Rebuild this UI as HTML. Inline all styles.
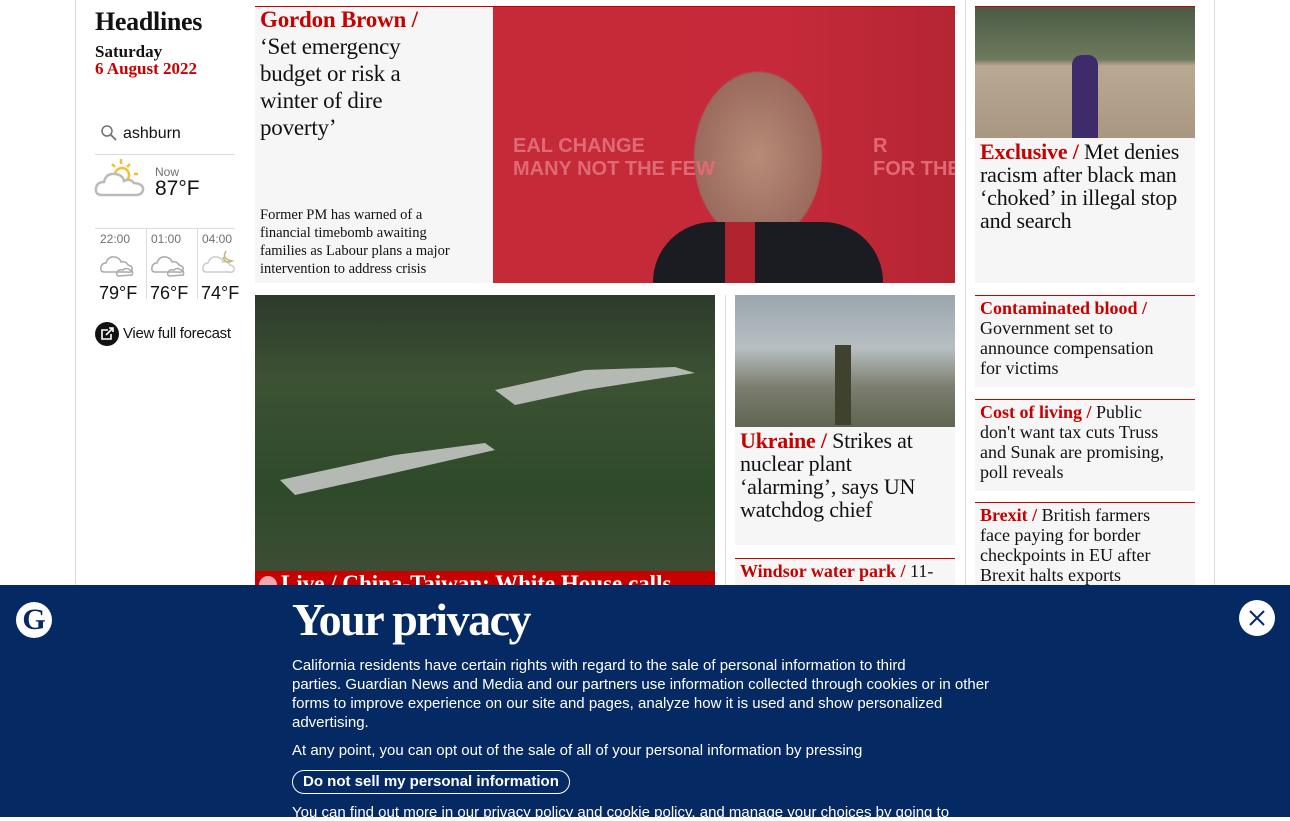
<!DOCTYPE html><html><head><style>
*{margin:0;padding:0;box-sizing:border-box}
body{width:1290px;height:817px;overflow:hidden;background:#fff;font-family:"Liberation Serif",serif;position:relative;color:#121212}
.a{position:absolute}
.k{color:#c70000;font-weight:bold}
.h{font-size:22px;line-height:23px;letter-spacing:-0.2px}
.s{font-family:"Liberation Sans",sans-serif}
.card{position:absolute;background:#f6f6f6;border-top:1px solid #c70000;padding:2px 5px}
.c{font-size:18px;line-height:20px;width:200px}
</style></head><body>
<div class="a" style="left:75px;top:0;width:1px;height:600px;background:#dcdcdc"></div>
<div class="a" style="left:1214px;top:0;width:1px;height:600px;background:#dcdcdc"></div>
<div class="a" style="left:725px;top:295px;width:1px;height:300px;background:#dcdcdc"></div>
<div class="a" style="left:965px;top:0;width:1px;height:600px;background:#dcdcdc"></div>

<div class="a" style="left:95px;top:7px;font-size:26px;font-weight:bold;letter-spacing:-0.3px">Headlines</div>
<div class="a" style="left:95px;top:43px;font-size:17px;font-weight:bold;line-height:17px">Saturday<br><span style="color:#c70000">6 August 2022</span></div>
<svg class="a" style="left:100px;top:124px" width="18" height="18"><circle cx="7" cy="7" r="5" fill="none" stroke="#707070" stroke-width="1.5"/><path d="M11 11L16 16" stroke="#707070" stroke-width="1.8"/></svg>
<div class="a s" style="left:123px;top:125px;font-size:16px">ashburn</div>
<div class="a" style="left:95px;top:154px;width:140px;height:1px;background:#dcdcdc"></div>
<svg class="a" style="left:94px;top:157px" width="56" height="42"><g stroke="#f5be2c" stroke-width="2.5"><line x1="27" y1="2" x2="27" y2="7"/><line x1="18" y1="7" x2="21" y2="10"/><line x1="36" y1="7" x2="33" y2="10"/><line x1="40" y1="17" x2="44" y2="17"/></g><circle cx="28" cy="18" r="7" fill="none" stroke="#f5be2c" stroke-width="2.5"/><path d="M8 38 Q1 38 2 31 Q3 25 10 25 Q12 16 21 17 Q29 18 30 24 Q36 21 40 26 Q50 27 49 33 Q48 38 42 38 Z" fill="#fff" stroke="#bbb" stroke-width="2.5"/></svg>
<div class="a s" style="left:155px;top:165px;font-size:12px;color:#707070">Now</div>
<div class="a s" style="left:155px;top:177px;font-size:21px">87°F</div>
<div class="a" style="left:95px;top:228px;width:140px;height:1px;background:#dcdcdc"></div>
<div class="a" style="left:146px;top:229px;width:1px;height:70px;background:#dcdcdc"></div>
<div class="a" style="left:197px;top:229px;width:1px;height:70px;background:#dcdcdc"></div>
<div class="a s" style="left:100px;top:232px;font-size:12px;color:#707070">22:00</div>
<div class="a s" style="left:151px;top:232px;font-size:12px;color:#707070">01:00</div>
<div class="a s" style="left:202px;top:232px;font-size:12px;color:#707070">04:00</div>
<svg class="a" style="left:99px;top:250px" width="140" height="28"><g fill="none" stroke="#aaa" stroke-width="1.5"><path d="M5 22 Q1 22 2 17 Q3 13 7 13 Q9 6 16 7 Q21 8 22 12 Q27 11 29 15 Q34 16 33 20 Q32 23 28 22 Z"/><path d="M20 26 Q17 26 18 22 Q20 19 24 20 Q27 17 31 20 Q35 21 33 25 Z"/><path d="M56 22 Q52 22 53 17 Q54 13 58 13 Q60 6 67 7 Q72 8 73 12 Q78 11 80 15 Q85 16 84 20 Q83 23 79 22 Z"/><path d="M71 26 Q68 26 69 22 Q71 19 75 20 Q78 17 82 20 Q86 21 84 25 Z"/><path d="M107 22 Q103 22 104 17 Q105 13 109 13 Q111 6 118 7 Q123 8 124 12 Q129 11 131 15 Q136 16 135 20 Q134 23 130 22 Z" stroke="#ccc"/><path d="M127 1 Q122 9 133 11 Q126 14 124 7" stroke="#c9b07a"/></g></svg>
<div class="a s" style="left:99px;top:283px;font-size:18px">79°F</div>
<div class="a s" style="left:150px;top:283px;font-size:18px">76°F</div>
<div class="a s" style="left:201px;top:283px;font-size:18px">74°F</div>
<div class="a" style="left:95px;top:322px;width:24px;height:24px;border-radius:50%;background:#121212"></div>
<svg class="a" style="left:95px;top:322px" width="24" height="24"><path d="M13 8H7V17H16V12" fill="none" stroke="#fff" stroke-width="1.6"/><path d="M11 13L18 6M14 6H18V10" fill="none" stroke="#fff" stroke-width="1.6"/></svg>
<div class="a s" style="left:123px;top:325px;font-size:15px;letter-spacing:-0.3px">View full forecast</div>

<div class="card" style="left:255px;top:6px;width:238px;height:277px"><div class="h" style="width:185px;font-size:23px;line-height:27px;margin-top:-3px"><span class="k">Gordon Brown /</span><br>‘Set emergency budget or risk a winter of dire poverty’</div>
<div class="a" style="left:5px;top:199px;font-size:14.5px;line-height:18px;white-space:nowrap">Former PM has warned of a<br>financial timebomb awaiting<br>families as Labour plans a major<br>intervention to address crisis</div></div>
<div class="a" style="left:493px;top:6px;width:462px;height:277px;background:radial-gradient(ellipse 90px 120px at 265px 150px,#b88b78 0%,#9a6b5e 70%,transparent 72%),linear-gradient(90deg,#c42a38,#c62a3a 60%,#b52534);border-top:1px solid #c70000;overflow:hidden">
<div class="a" style="left:160px;top:215px;width:230px;height:62px;background:#1a1c22;border-radius:60px 60px 0 0"></div>
<div class="a" style="left:232px;top:215px;width:30px;height:62px;background:#b0232f"></div>
<div class="a" style="left:20px;top:128px;color:#e06a74;font:bold 20px 'Liberation Sans';">EAL CHANGE<br>MANY NOT THE FEW</div>
<div class="a" style="left:380px;top:128px;color:#e06a74;font:bold 20px 'Liberation Sans';white-space:nowrap">R<br>FOR THE</div></div>

<div class="a" style="left:975px;top:6px;width:220px;height:132px;background:linear-gradient(#4b5a45 0,#6d7a5c 40%,#b9a892 45%,#a99781 100%);border-top:1px solid #c70000"><div class="a" style="left:97px;top:48px;width:26px;height:83px;background:#3e2b6b;border-radius:10px 10px 0 0"></div></div>
<div class="a" style="left:975px;top:138px;width:220px;height:145px;background:#f6f6f6;padding:2px 5px"><div class="h" style="white-space:nowrap"><span class="k">Exclusive /</span> Met denies<br>racism after black man<br>‘choked’ in illegal stop<br>and search</div></div>

<div class="a" style="left:255px;top:295px;width:460px;height:276px;background:linear-gradient(#2d3a2c,#3c5233 30%,#2e4a2a 70%,#3d4d34)">
<svg class="a" style="left:0;top:0" width="460" height="276"><path d="M240 95 L330 75 L420 72 L440 78 L330 95 L260 110 Z" fill="#b5b9b4"/><path d="M25 185 L140 160 L230 148 L240 155 L130 180 L40 200 Z" fill="#b5b9b4"/></svg></div>
<div class="a" style="left:255px;top:571px;width:460px;height:20px;background:#c70000;color:#fff;font-size:23px;font-weight:bold;padding-left:26px;line-height:26px;overflow:hidden;white-space:nowrap">Live / China-Taiwan: White House calls</div>
<div class="a" style="left:259px;top:576px;width:18px;height:18px;border-radius:50%;background:#f2a6ad"></div>

<div class="a" style="left:735px;top:295px;width:220px;height:132px;background:linear-gradient(#9aa6ad,#b7bfc2 40%,#7b7d6e 70%,#5e6651)"><div class="a" style="left:100px;top:50px;width:16px;height:80px;background:#3f432e"></div></div>
<div class="a" style="left:735px;top:427px;width:220px;height:118px;background:#f6f6f6;padding:2px 5px"><div class="h" style="width:185px"><span class="k">Ukraine /</span> Strikes at nuclear plant ‘alarming’, says UN watchdog chief</div></div>
<div class="card" style="left:735px;top:558px;width:220px;height:40px;font-size:18px;line-height:20px"><span class="k">Windsor water park /</span> 11-</div>

<div class="card" style="left:975px;top:295px;width:220px;height:92px"><div class="c" style="white-space:nowrap"><span class="k">Contaminated blood /</span><br>Government set to<br>announce compensation<br>for victims</div></div>
<div class="card" style="left:975px;top:399px;width:220px;height:92px"><div class="c"><span class="k">Cost of living /</span> Public don't want tax cuts Truss and Sunak are promising, poll reveals</div></div>
<div class="card" style="left:975px;top:502px;width:220px;height:92px"><div class="c"><span class="k">Brexit /</span> British farmers face paying for border checkpoints in EU after Brexit halts exports</div></div>

<div class="a" style="left:0;top:585px;width:1290px;height:232px;background:#052962;color:#fff">
<div class="a" style="left:16px;top:17px;width:36px;height:36px;border-radius:50%;background:#fff;color:#052962;font:bold 30px/36px 'Liberation Serif';text-align:center">G</div>
<div class="a" style="left:292px;top:8px;font-size:46px;font-weight:bold;letter-spacing:-1.5px">Your privacy</div>
<div class="a s" style="left:292px;top:71px;font-size:15px;line-height:19px;white-space:nowrap">California residents have certain rights with regard to the sale of personal information to third<br>parties. Guardian News and Media and our partners use information collected through cookies or in other<br>forms to improve experience on our site and pages, analyze how it is used and show personalized<br>advertising.</div>
<div class="a s" style="left:292px;top:157px;font-size:15px">At any point, you can opt out of the sale of all of your personal information by pressing</div>
<div class="a s" style="left:292px;top:185px;height:24px;border:1px solid #fff;border-radius:12px;padding:0 10px;font-size:15px;font-weight:bold;line-height:22px">Do not sell my personal information</div>
<div class="a s" style="left:292px;top:219px;font-size:15px">You can find out more in our privacy policy and cookie policy, and manage your choices by going to</div>
<div class="a" style="left:1239px;top:15px;width:36px;height:36px;border-radius:50%;background:#fff"><svg width="36" height="36"><path d="M11 11L25 25M25 11L11 25" stroke="#052962" stroke-width="2"/></svg></div>
</div>
</body></html>
